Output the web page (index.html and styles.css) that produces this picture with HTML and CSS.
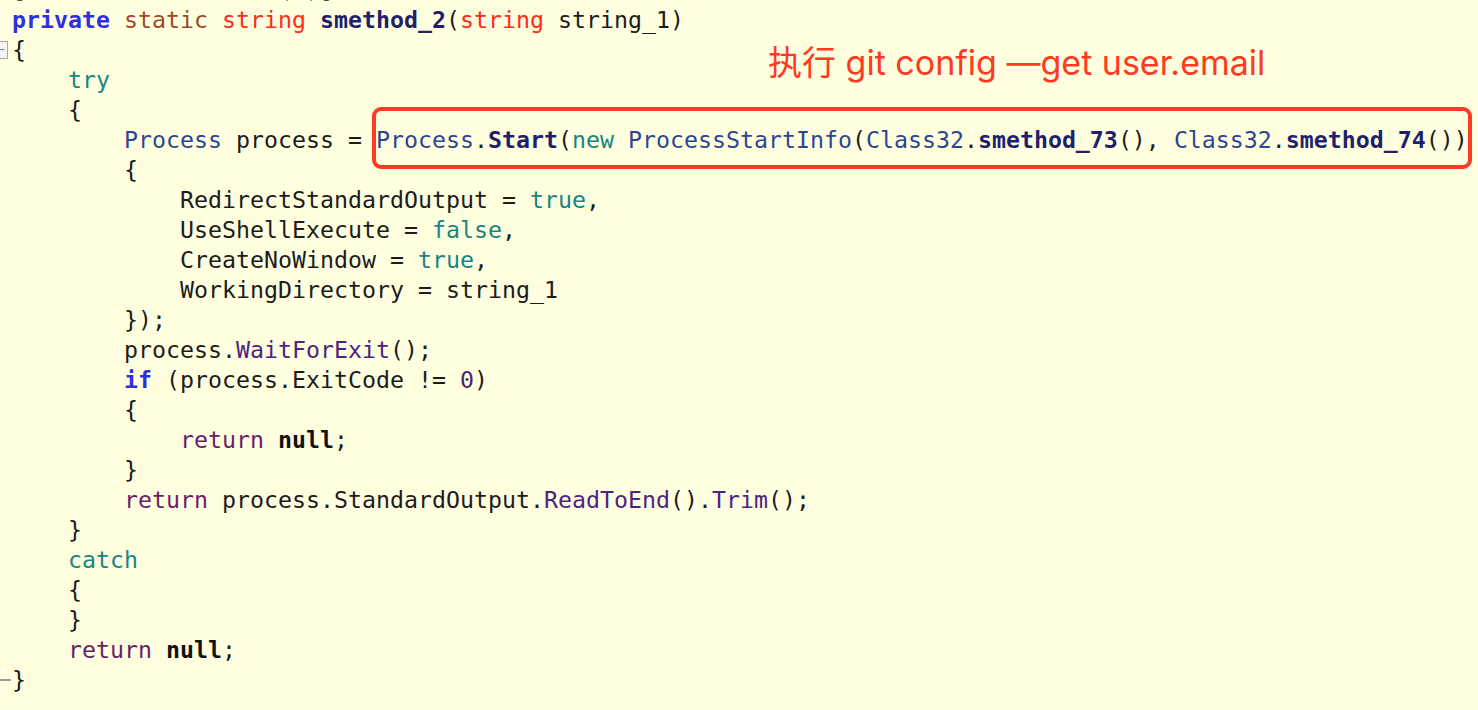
FILE: index.html
```html
<!DOCTYPE html>
<html lang="zh">
<head>
<meta charset="utf-8">
<title>smethod_2</title>
<link rel="stylesheet" href="styles.css">
</head>
<body>
<div class="editor">
  <div class="code">
    <div class="ln"><span class="g"></span><span class="c">[STAThreadAttribute(0)]</span></div>
    <div class="ln"><span class="g"></span><span class="c"><span class="k-blue">private</span> <span class="k-static">static</span> <span class="k-red">string</span> <span class="m-bold">smethod_2</span>(<span class="k-red">string</span> string_1)</span></div>
    <div class="ln"><span class="g"><span class="fold">−</span></span><span class="c">{</span></div>
    <div class="ln"><span class="g"></span><span class="c">    <span class="teal">try</span></span></div>
    <div class="ln"><span class="g"></span><span class="c">    {</span></div>
    <div class="ln"><span class="g"></span><span class="c">        <span class="type">Process</span> process = <span class="hl"><span class="type">Process</span>.<span class="m-bold">Start</span>(<span class="teal">new</span> <span class="type">ProcessStartInfo</span>(<span class="type">Class32</span>.<span class="m-bold">smethod_73</span>(), <span class="type">Class32</span>.<span class="m-bold">smethod_74</span>())</span></span></div>
    <div class="ln"><span class="g"></span><span class="c">        {</span></div>
    <div class="ln"><span class="g"></span><span class="c">            RedirectStandardOutput = <span class="teal">true</span>,</span></div>
    <div class="ln"><span class="g"></span><span class="c">            UseShellExecute = <span class="teal">false</span>,</span></div>
    <div class="ln"><span class="g"></span><span class="c">            CreateNoWindow = <span class="teal">true</span>,</span></div>
    <div class="ln"><span class="g"></span><span class="c">            WorkingDirectory = string_1</span></div>
    <div class="ln"><span class="g"></span><span class="c">        });</span></div>
    <div class="ln"><span class="g"></span><span class="c">        process.<span class="meth">WaitForExit</span>();</span></div>
    <div class="ln"><span class="g"></span><span class="c">        <span class="k-blue">if</span> (process.ExitCode != <span class="num">0</span>)</span></div>
    <div class="ln"><span class="g"></span><span class="c">        {</span></div>
    <div class="ln"><span class="g"></span><span class="c">            <span class="ret">return</span> <span class="null">null</span>;</span></div>
    <div class="ln"><span class="g"></span><span class="c">        }</span></div>
    <div class="ln"><span class="g"></span><span class="c">        <span class="ret">return</span> process.StandardOutput.<span class="meth">ReadToEnd</span>().<span class="meth">Trim</span>();</span></div>
    <div class="ln"><span class="g"></span><span class="c">    }</span></div>
    <div class="ln"><span class="g"></span><span class="c">    <span class="teal">catch</span></span></div>
    <div class="ln"><span class="g"></span><span class="c">    {</span></div>
    <div class="ln"><span class="g"></span><span class="c">    }</span></div>
    <div class="ln"><span class="g"></span><span class="c">    <span class="ret">return</span> <span class="null">null</span>;</span></div>
    <div class="ln"><span class="g"><span class="fold-end"></span></span><span class="c">}</span></div>
  </div>
  <div class="note">执行 git config —get user.email</div>
</div>
</body>
</html>
```

FILE: styles.css
```css
html, body {
  margin: 0;
  padding: 0;
  background: #ffffe0;
  overflow: hidden;
}

.editor {
  position: relative;
  width: 1478px;
  height: 710px;
  overflow: hidden;
  background: #ffffe0;
}

.code {
  margin-top: -25px;
  font-family: "DejaVu Sans Mono", monospace;
  font-size: 23.26px;
  line-height: 30px;
  color: #1c1c1c;
}

.ln {
  display: grid;
  grid-template-columns: 12px 1fr;
  height: 30px;
}

.g {
  position: relative;
  display: flex;
  align-items: center;
}

.c {
  white-space: pre;
}

.fold {
  display: flex;
  align-items: center;
  justify-content: center;
  margin-left: -5px;
  width: 11px;
  height: 16px;
  border: 1px solid #a8a8a8;
  background: #f4f4f4;
  color: #777;
  font-family: "DejaVu Sans", sans-serif;
  font-size: 10px;
  line-height: 1;
}

.fold-end {
  display: block;
  width: 11px;
  height: 2px;
  background: #9a9a9a;
}

.k-blue { color: #2f2fe0; font-weight: bold; }
.k-static { color: #a0482a; }
.k-red { color: #ff2a1a; }
.m-bold { color: #1f1f6b; font-weight: bold; }
.type { color: #2c4690; }
.teal { color: #178585; }
.meth { color: #4c2482; }
.ret { color: #6b1d6b; }
.num { color: #4e1f6e; }
.null { color: #111111; font-weight: bold; }

.hl {
  border: 4px solid #ff3a24;
  border-radius: 9px;
  padding: 15px 0 12px 0;
  margin: 0 -4px;
}

.note {
  position: absolute;
  left: 768px;
  top: 38px;
  font-family: Inter, "Noto Sans CJK SC", sans-serif;
  font-size: 34px;
  line-height: 50px;
  color: #ff3a22;
  white-space: nowrap;
}
```
